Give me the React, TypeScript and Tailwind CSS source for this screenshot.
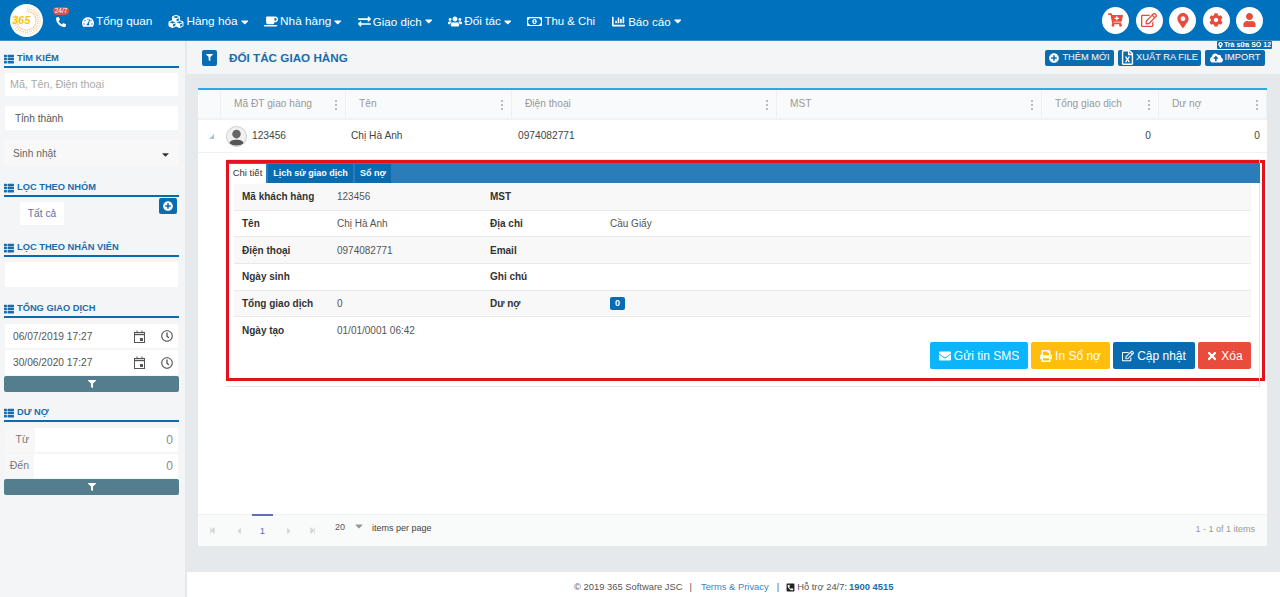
import React from 'react';
import {
  FaTachometerAlt, FaCubes, FaCoffee, FaExchangeAlt, FaUsers, FaRegMoneyBillAlt, FaChartBar, FaCaretDown,
  FaPhoneAlt, FaCartPlus, FaRegEdit, FaMapMarkerAlt, FaCog, FaUser, FaThList, FaFilter, FaPlusCircle,
  FaRegFileExcel, FaCloudUploadAlt, FaEnvelope, FaPrint, FaTimes, FaRegClock, FaStepBackward,
  FaStepForward, FaCaretLeft, FaCaretRight, FaPhoneSquareAlt,
} from 'react-icons/fa';

const navItems = [
  { icon: FaTachometerAlt, label: 'Tổng quan', caret: false, size: 'w-[12px] h-[12px]', text: 'text-[11.8px]' },
  { icon: FaCubes, label: 'Hàng hóa', caret: true, size: 'w-[16px] h-[15px]', text: 'text-[11.8px]' },
  { icon: FaCoffee, label: 'Nhà hàng', caret: true, size: 'w-[14px] h-[13px]', text: 'text-[11.8px]' },
  { icon: FaExchangeAlt, label: 'Giao dịch', caret: true, size: 'w-[13px] h-[13px]', text: 'text-[11.6px]' },
  { icon: FaUsers, label: 'Đối tác', caret: true, size: 'w-[14px] h-[13px]', text: 'text-[11.8px]' },
  { icon: FaRegMoneyBillAlt, label: 'Thu & Chi', caret: false, size: 'w-[15px] h-[13px]', text: 'text-[11.4px]' },
  { icon: FaChartBar, label: 'Báo cáo', caret: true, size: 'w-[15px] h-[13px]', text: 'text-[11.6px]' },
];

const roundIcons = [
  { icon: FaCartPlus, size: 'w-[15px] h-[14px]' },
  { icon: FaRegEdit, size: 'w-[16px] h-[16px]' },
  { icon: FaMapMarkerAlt, size: 'w-[12px] h-[15px]' },
  { icon: FaCog, size: 'w-[14px] h-[14px]' },
  { icon: FaUser, size: 'w-[13px] h-[14px]' },
];

const columns = [
  { label: 'Mã ĐT giao hàng', w: 'w-[125px]' },
  { label: 'Tên', w: 'w-[166px]' },
  { label: 'Điện thoại', w: 'w-[265px]' },
  { label: 'MST', w: 'w-[265px]' },
  { label: 'Tổng giao dịch', w: 'w-[117px]' },
  { label: 'Dư nợ', w: 'w-[108px]' },
];

const detailRows = [
  { a: 'Mã khách hàng', b: '123456', c: 'MST', d: '' },
  { a: 'Tên', b: 'Chị Hà Anh', c: 'Địa chỉ', d: 'Cầu Giấy' },
  { a: 'Điện thoại', b: '0974082771', c: 'Email', d: '' },
  { a: 'Ngày sinh', b: '', c: 'Ghi chú', d: '' },
  { a: 'Tổng giao dịch', b: '0', c: 'Dư nợ', d: 'badge' },
  { a: 'Ngày tạo', b: '01/01/0001 06:42', c: '', d: '' },
];

function SideTitle({ text }: { text: string }) {
  return (
    <div className="flex items-center gap-[3px] h-[13px] pt-[2px] border-b-2 border-[#0a6cb0] pb-[1px] box-content text-[#1a6dab] text-[9.3px] font-bold leading-none">
      <FaThList className="w-[10px] h-[10px]" />
      <span>{text}</span>
    </div>
  );
}

function Logo() {
  const dots = [];
  for (let i = 0; i < 30; i++) {
    const a = (i / 36) * Math.PI * 2 - 1.5;
    for (let r = 0; r < 3; r++) {
      dots.push(<circle key={`${i}-${r}`} cx={16.5 + Math.cos(a) * (9.5 + r * 2.2)} cy={16.5 + Math.sin(a) * (9.5 + r * 2.2)} r={0.55} fill={r === 2 ? '#f8c99a' : '#f2a552'} />);
    }
  }
  return (
    <div className="relative w-[33px] h-[33px] rounded-full bg-white flex items-center pl-[2px]">
      <svg viewBox="0 0 33 33" className="absolute inset-0 w-[33px] h-[33px]">{dots}</svg>
      <span className="relative text-[11px] font-bold italic text-[#f5c518] leading-none">365</span>
    </div>
  );
}

function CalendarIcon() {
  return (
    <svg viewBox="0 0 13 13" className="w-[13px] h-[13px] shrink-0" fill="none" stroke="#555">
      <rect x="1.5" y="2.5" width="10" height="10" />
      <path d="M1 4.5H12" strokeWidth="1.4" />
      <path d="M4 0.5V2.5M9 0.5V2.5" />
      <rect x="7" y="8" width="3" height="3" fill="#555" stroke="none" />
    </svg>
  );
}

function Header() {
  return (
    <header className="h-[41px] shrink-0 bg-[#0071bc] border-b border-[#3f8fc6] flex items-center">
      <div className="ml-[10px]"><Logo /></div>
      <div className="relative w-[39px] h-full">
        <FaPhoneAlt className="absolute left-[13px] top-[17px] w-[10px] h-[10px] text-white" />
        <span className="absolute left-[10px] top-[7px] h-[8px] w-[16px] rounded-full bg-[#d9534f] text-white text-[6.5px] leading-[8px] text-center">24/7</span>
      </div>
      <nav className="flex items-center gap-4 text-white mt-[3px]">
        {navItems.map(item => {
          const Icon = item.icon;
          return (
            <div key={item.label} className="flex items-center gap-[2px]">
              <Icon className={item.size} />
              <span className={item.text}>{item.label}</span>
              {item.caret && <FaCaretDown className="ml-[1px] w-[7.5px] h-[12px]" />}
            </div>
          );
        })}
      </nav>
      <div className="ml-auto mr-[17px] flex items-center gap-[6.5px]">
        {roundIcons.map((r, i) => {
          const Icon = r.icon;
          return (
            <div key={i} className="w-[27px] h-[27px] rounded-full bg-white flex items-center justify-center text-[#e74c3c]">
              <Icon className={r.size} />
            </div>
          );
        })}
      </div>
    </header>
  );
}

function Sidebar() {
  return (
    <aside className="w-[185px] shrink-0 bg-[#f3f5f7] pl-[4px] pr-[6px] pt-[9px] text-[10.2px] text-[#666]">
      <SideTitle text="TÌM KIẾM" />
      <div className="mt-[5px] mx-[1px] h-[23px] bg-white flex items-center pl-[5px] text-[#aaa] text-[10.8px]">Mã, Tên, Điện thoại</div>
      <div className="mt-[10px] mx-[1px] h-[24px] bg-white flex items-center pl-[10px] pt-[2px] text-[#555]">Tỉnh thành</div>
      <div className="mt-[10px] h-[26px] bg-[#f8f8f8] flex items-center justify-between pl-[9px] pr-[10px] pt-[2px] text-[#666]">
        <span>Sinh nhật</span>
        <FaCaretDown className="w-[7px] h-[11px] text-[#333]" />
      </div>

      <div className="mt-[13px]"><SideTitle text="LỌC THEO NHÓM" /></div>
      <div className="relative h-[42px]">
        <div className="absolute left-[16px] top-[5px] w-[44px] h-[23px] bg-white flex items-center justify-center text-[#5f6db5]">Tất cả</div>
        <div className="absolute right-[2px] top-[1px] w-[18px] h-[16px] rounded-[2px] bg-[#0a6cb0] flex items-center justify-center">
          <FaPlusCircle className="w-[10px] h-[10px] text-white" />
        </div>
      </div>

      <SideTitle text="LỌC THEO NHÂN VIÊN" />
      <div className="mt-[5px] mx-[1px] h-[25px] bg-white" />

      <div className="mt-[13px]"><SideTitle text="TỔNG GIAO DỊCH" /></div>
      <div className="mt-[6px] mx-[1px] h-[24px] bg-white flex items-center pl-[8px] text-[#555]">
        <span className="w-[120px] pt-[2px]">06/07/2019 17:27</span>
        <CalendarIcon />
        <FaRegClock className="ml-[15px] w-[12px] h-[12px] text-[#555]" />
      </div>
      <div className="mt-[2px] mx-[1px] h-[25px] bg-white flex items-center pl-[8px] text-[#555]">
        <span className="w-[120px]">30/06/2020 17:27</span>
        <CalendarIcon />
        <FaRegClock className="ml-[15px] w-[12px] h-[12px] text-[#555]" />
      </div>
      <div className="mt-[1px] h-[16px] rounded-[2px] bg-[#547e8e] flex items-center justify-center">
        <FaFilter className="w-[8px] h-[8px] text-white" />
      </div>

      <div className="mt-[12px]"><SideTitle text="DƯ NỢ" /></div>
      <div className="mt-[6px] mx-[1px] h-[24px] flex items-center">
        <span className="w-[30px] h-full bg-[#f7f7f7] flex items-center justify-end pr-[6px] text-[#777] text-[10.5px]">Từ</span>
        <span className="flex-1 h-full bg-white flex items-center justify-end pr-[5px] text-[#888] text-[12px]">0</span>
      </div>
      <div className="mt-[2px] mx-[1px] h-[24px] flex items-center">
        <span className="w-[29px] h-full bg-[#f7f7f7] flex items-center justify-end pr-[5px] text-[#777] text-[10.5px]">Đến</span>
        <span className="flex-1 h-full bg-white flex items-center justify-end pr-[5px] text-[#888] text-[12px]">0</span>
      </div>
      <div className="mt-[1px] h-[16px] rounded-[2px] bg-[#547e8e] flex items-center justify-center">
        <FaFilter className="w-[8px] h-[8px] text-white" />
      </div>
    </aside>
  );
}

function TopBar() {
  return (
    <div className="relative ml-[2px] h-[33px] shrink-0 bg-[#f3f5f7] flex items-center pl-[15px] pr-[15px]">
      <div className="w-[15px] h-[16px] rounded-[2px] bg-[#0a6cb0] flex items-center justify-center">
        <FaFilter className="w-[7px] h-[7px] text-white" />
      </div>
      <span className="ml-[12px] text-[11.7px] font-bold text-[#1a6dab]">ĐỐI TÁC GIAO HÀNG</span>
      <div className="ml-auto flex items-center gap-[4px] text-white text-[9.3px]">
        <div className="w-[69px] h-[16px] rounded-[2px] bg-[#0a6cb0] flex items-center justify-center gap-[3px]">
          <FaPlusCircle className="w-[10px] h-[10px]" />THÊM MỚI
        </div>
        <div className="w-[83px] h-[16px] rounded-[2px] bg-[#0a6cb0] flex items-center justify-center gap-[2px]">
          <FaRegFileExcel className="w-[13px] h-[15px]" />XUẤT RA FILE
        </div>
        <div className="w-[60px] h-[16px] rounded-[2px] bg-[#0a6cb0] flex items-center justify-center gap-[2px]">
          <FaCloudUploadAlt className="w-[13px] h-[12px]" />IMPORT
        </div>
      </div>
      <div className="absolute right-[8px] top-0 h-[8px] w-[55px] rounded-[1px] bg-[#0a6cb0] text-white text-[7px] leading-[8px] font-bold flex items-center justify-center gap-[1px]">
        <FaMapMarkerAlt className="w-[5px] h-[6px]" />Trà sữa SỐ 12
      </div>
    </div>
  );
}

function ActionButton({ icon: Icon, label, className }: { icon: React.ComponentType<{ className?: string }>; label: string; className: string }) {
  return (
    <div className={`h-[27px] rounded-[2px] text-white text-[12px] flex items-center justify-center gap-[3px] ${className}`}>
      <Icon className="w-[12px] h-[12px]" />
      {label}
    </div>
  );
}

function DetailPanel() {
  return (
    <div className="relative ml-[28px] mr-[2px] mt-[7px] h-[221px] border-[3px] border-[#e3121f] bg-white flex flex-col">
      {/* faint panel frame that the red marker sits on */}
      <div className="absolute left-[-3px] top-[-4px] w-[1034px] h-[228px] border-t border-r border-b border-[#e6e6e6]" />
      <div className="relative h-[20px] shrink-0 mr-[2px] bg-[#2a7db8] flex items-end text-[9px] font-bold text-white">
        <span className="w-[37px] h-[19px] bg-white text-[#333] text-[9.5px] font-normal flex items-center justify-center">Chi tiết</span>
        <span className="ml-[2px] w-[85px] h-[19px] bg-[#0a6cb0] flex items-center justify-center">Lịch sử giao dịch</span>
        <span className="ml-[2px] w-[36px] h-[19px] bg-[#0a6cb0] flex items-center justify-center">Sổ nợ</span>
      </div>
      <div className="relative ml-[5px] mr-[11px] mt-[1px] text-[10px] text-[#555]">
        {detailRows.map((row, i) => (
          <div key={row.a} className={`h-[26.7px] flex items-center border-b ${i === 5 ? 'border-transparent' : 'border-[#e9e9e9]'} ${i % 2 === 0 && i < 5 ? 'bg-[#f8f8f8]' : 'bg-white'}`}>
            <span className="w-[103px] pl-[8px] font-bold text-[#333]">{row.a}</span>
            <span className="w-[153px]">{row.b}</span>
            <span className="w-[120px] font-bold text-[#333]">{row.c}</span>
            {row.d === 'badge' ? (
              <span className="w-[15px] h-[13px] rounded-[2px] bg-[#0a6cb0] text-white text-[9px] font-bold flex items-center justify-center">0</span>
            ) : (
              <span>{row.d}</span>
            )}
          </div>
        ))}
      </div>
      <div className="relative mr-[11px] mt-[-2px] flex justify-end gap-[3px]">
        <ActionButton icon={FaEnvelope} label="Gửi tin SMS" className="w-[98px] bg-[#0cb4fa]" />
        <ActionButton icon={FaPrint} label="In Sổ nợ" className="w-[79px] bg-[#ffbe0b]" />
        <ActionButton icon={FaRegEdit} label="Cập nhật" className="w-[82px] bg-[#0a6cb0]" />
        <ActionButton icon={FaTimes} label="Xóa" className="w-[53px] bg-[#e74c3c]" />
      </div>
    </div>
  );
}

function Grid() {
  return (
    <div className="mx-[13px] mt-[14px] h-[458px] border-t-2 border-[#29abe2] bg-white flex flex-col text-[10.2px]">
      <div className="h-[30px] shrink-0 bg-[#f9fafb] border-b-2 border-[#f1f2f4] flex text-[#999]">
        <div className="w-[23px] border-r border-[#eef0f2]" />
        {columns.map(c => (
          <div key={c.label} className={`${c.w} border-r border-[#eef0f2] relative flex items-center pl-[13px] pb-[1px]`}>
            <span>{c.label}</span>
            <span className="absolute right-[8px] top-[10px] flex flex-col gap-[2px]">
              <i className="block w-[2px] h-[2px] bg-[#bbb]" />
              <i className="block w-[2px] h-[2px] bg-[#bbb]" />
              <i className="block w-[2px] h-[2px] bg-[#bbb]" />
            </span>
          </div>
        ))}
      </div>
      <div className="h-[33px] shrink-0 border-b border-[#f1f1f1] flex items-center text-[#444]">
        <div className="w-[23px] flex justify-center pl-[4px]">
          <svg viewBox="0 0 6 6" className="w-[5px] h-[5px]"><path d="M6 0V6H0Z" fill="#a9c3d6" /></svg>
        </div>
        <div className="w-[125px] flex items-center pl-[5px] gap-[5px]">
          <div className="w-[21px] h-[21px] rounded-full border border-[#ccc] bg-[#f1f1f1] overflow-hidden flex items-center justify-center">
            <svg viewBox="0 0 20 20" className="w-[20px] h-[20px]"><circle cx="10" cy="8" r="4.5" fill="#666" /><path d="M2 20c0-5 4-6 8-6s8 1 8 6z" fill="#555" /></svg>
          </div>
          <span>123456</span>
        </div>
        <div className="w-[166px] pl-[5px]">Chị Hà Anh</div>
        <div className="w-[265px] pl-[6px]">0974082771</div>
        <div className="w-[265px]" />
        <div className="w-[117px] text-right pr-[8px]">0</div>
        <div className="w-[108px] text-right pr-[7px]">0</div>
      </div>
      <DetailPanel />
      <div className="mt-auto h-[32px] shrink-0 bg-[#f9fafa] border-t border-[#f1f1f1] flex items-center text-[9px] text-[#555] relative">
        <FaStepBackward className="ml-[11px] w-[7px] h-[7px] text-[#d5d5d5]" />
        <FaCaretLeft className="ml-[20px] w-[6px] h-[10px] text-[#d5d5d5]" />
        <span className="absolute left-[54px] top-[-1px] h-[32px] w-[21px] border-t-2 border-[#5f6db5] text-center pt-[8px] text-[#5f6db5] text-[9.5px]">1</span>
        <FaCaretRight className="ml-[44px] w-[6px] h-[10px] text-[#d5d5d5]" />
        <FaStepForward className="ml-[17px] w-[7px] h-[7px] text-[#d5d5d5]" />
        <span className="ml-[19px] pb-[5px]">20</span>
        <FaCaretDown className="ml-[10px] mb-[9px] w-[8px] h-[12px] text-[#999]" />
        <span className="ml-[9px] pb-[4px] text-[#444]">items per page</span>
        <span className="ml-auto mr-[12px] text-[#999] pb-[2px]">1 - 1 of 1 items</span>
      </div>
    </div>
  );
}

export default function App() {
  return (
    <div className="w-[1280px] h-[597px] overflow-hidden flex flex-col bg-white" style={{ fontFamily: '"Liberation Sans", Arial, sans-serif' }}>
      <Header />
      <div className="flex-1 flex min-h-0">
        <Sidebar />
        <main className="flex-1 min-w-0 flex flex-col bg-[#e5e9ec]">
          <TopBar />
          <Grid />
          <footer className="mt-auto ml-[2px] h-[25px] shrink-0 bg-white flex items-center pl-[387px] text-[9.4px] text-[#555] pt-[5px]">
            <span>© 2019 365 Software JSC</span>
            <span className="ml-[7px]">|</span>
            <span className="ml-[9px] text-[#3c86bd]">Terms &amp; Privacy</span>
            <span className="ml-[8px]">|</span>
            <FaPhoneSquareAlt className="ml-[7px] w-[9px] h-[9px] text-[#222]" />
            <span className="ml-[2px]">Hỗ trợ 24/7:</span>
            <span className="ml-[2px] font-bold text-[#1a6dab]">1900 4515</span>
          </footer>
        </main>
      </div>
    </div>
  );
}
